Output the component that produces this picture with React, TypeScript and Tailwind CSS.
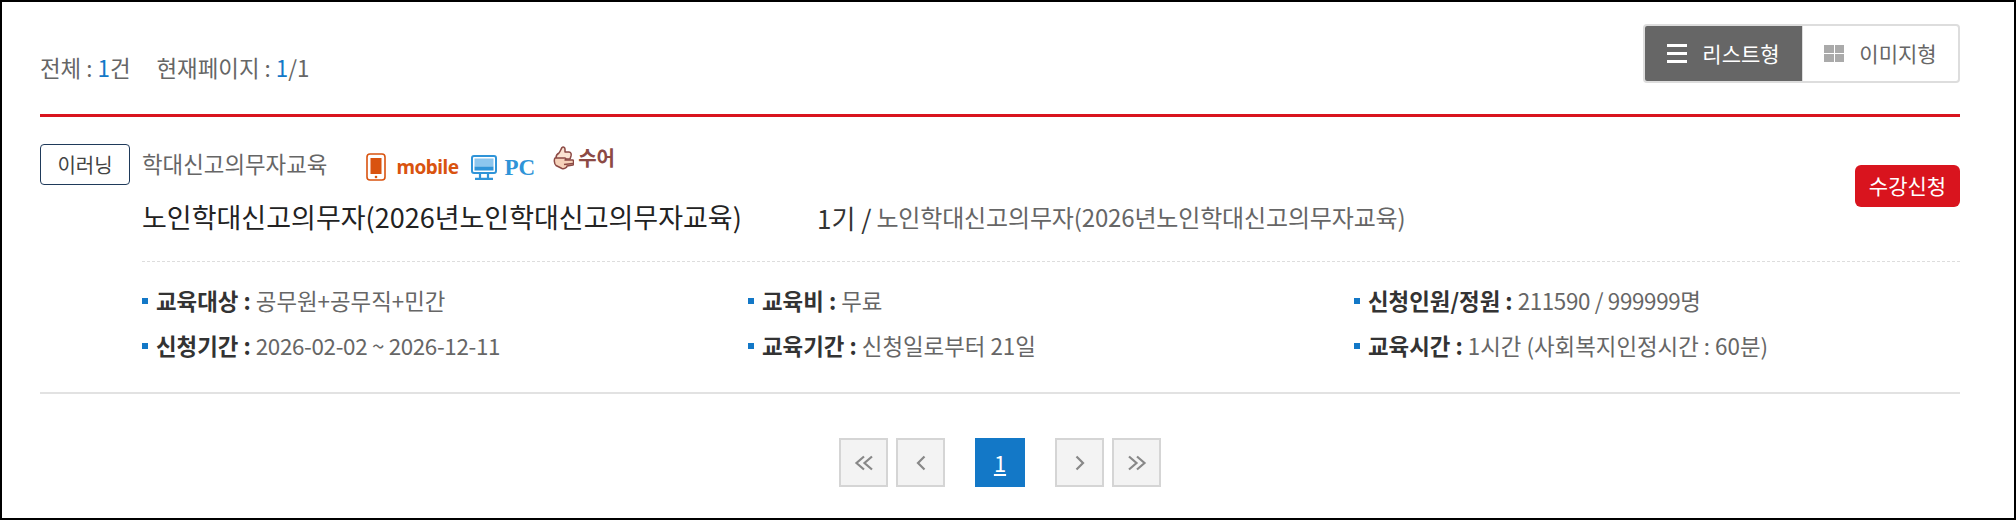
const FONT = "font-['Noto_Sans_CJK_KR','Noto_Sans',sans-serif]";

const infoItems = [
  { label: '교육대상', value: '공무원+공무직+민간' },
  { label: '교육비', value: '무료' },
  { label: '신청인원/정원', value: '211590 / 999999명', numeric: true },
  { label: '신청기간', value: '2026-02-02 ~ 2026-12-11', numeric: true },
  { label: '교육기간', value: '신청일로부터 21일' },
  { label: '교육시간', value: '1시간 (사회복지인정시간 : 60분)' },
];

function MobileBadge() {
  return (
    <span className="flex items-center gap-[10px] text-[#d9530f]">
      <svg width="20" height="28" viewBox="0 0 20 28">
        <rect x="1" y="1" width="18" height="26" rx="3" fill="none" stroke="currentColor" strokeWidth="1.6" />
        <rect x="4.5" y="5" width="11" height="16" fill="currentColor" />
        <circle cx="10" cy="24" r="1.3" fill="currentColor" />
      </svg>
      <span className="font-['Noto_Sans',sans-serif] text-[19px] font-bold leading-none tracking-[-0.5px]">mobile</span>
    </span>
  );
}

function PcBadge() {
  return (
    <span className="flex items-center gap-[8px] text-[#2f94d8]">
      <svg width="26" height="25" viewBox="0 0 26 25">
        <rect x="1" y="1" width="24" height="17" rx="2" fill="#fff" stroke="currentColor" strokeWidth="2" />
        <rect x="3.5" y="3.5" width="19" height="8" fill="#8cc6ee" />
        <rect x="3.5" y="11.5" width="19" height="4" fill="#2f94d8" />
        <path d="M9 18v5M17 18v5M4 23.8h18" fill="none" stroke="currentColor" strokeWidth="2.2" />
      </svg>
      <span className="font-['Liberation_Serif',serif] text-[23px] font-bold leading-none">PC</span>
    </span>
  );
}

function SignBadge() {
  return (
    <span className="flex items-center gap-[4px] text-[#8c4a45] mt-[-18px]">
      <svg width="21" height="24" viewBox="0 0 21 24" stroke="currentColor" strokeWidth="1.5" strokeLinejoin="round">
        <path d="M3 12c0-3 1-4 3-5 1-1 2-4 3-5.500 1-.8 3-.3 3 1.500v3h4c2 0 2.500 2 2 4l-1 3H3z" fill="#fbe3d2" />
        <path d="M2 12h10c1 0 1 2 0 2h8c.8 1 .8 4 0 5l-6 1c0 2-3 3-5 2.500l-6-3C1 18 1 13 2 12z" fill="#f6d2ba" />
        <path d="M11 18.500l9-1" fill="none" />
      </svg>
      <span className="text-[20px] font-bold leading-none">수어</span>
    </span>
  );
}

function PageBtn({ children }: { children: React.ReactNode }) {
  return (
    <a className="w-[49px] h-[49px] flex items-center justify-center bg-[#f3f3f3] border-2 border-[#d5d5d5] text-[#888]">
      {children}
    </a>
  );
}

function Chevron({ d }: { d: string }) {
  return (
    <svg width="20" height="16" viewBox="0 0 20 16" fill="none" stroke="currentColor" strokeWidth="2.2">
      <path d={d} />
    </svg>
  );
}

export default function App() {
  return (
    <div className={`${FONT} w-[2016px] h-[520px] bg-white border-2 border-black text-[22.4px] text-[#666] overflow-hidden`}>
      <div className="pl-[38px] pr-[54px] pt-[22px]">
        {/* top bar */}
        <div className="flex items-start justify-between h-[59px] mb-[31px]">
          <p className="mt-[28px] flex gap-[26px] leading-[30px]">
            <span>전체 : <b className="font-normal text-[#1378c7]">1</b>건</span>
            <span>현재페이지 : <b className="font-normal text-[#1378c7]">1</b>/1</span>
          </p>
          <div className="flex h-[59px] w-[317px] border-2 border-[#ddd] rounded-[4px] overflow-hidden text-[21px]">
            <button className="w-[157px] bg-[#666] text-white flex items-center justify-center gap-[15px]">
              <span className="w-[20px] h-[19px] flex flex-col justify-between">
                <i className="block h-[3px] bg-white" />
                <i className="block h-[3px] bg-white" />
                <i className="block h-[3px] bg-white" />
              </span>
              리스트형
            </button>
            <button className="flex-1 flex items-center justify-center gap-[15px] border-l border-[#ddd]">
              <span className="w-[20px] h-[17px] grid grid-cols-2 gap-[1px]">
                <i className="bg-[#aaa]" />
                <i className="bg-[#aaa]" />
                <i className="bg-[#aaa]" />
                <i className="bg-[#aaa]" />
              </span>
              이미지형
            </button>
          </div>
        </div>

        {/* list */}
        <div className="border-t-[3px] border-[#d9141e] border-b-2 border-b-[#e2e2e2] h-[280px] pt-[27px] relative">
          <div className="flex items-start h-[42px]">
            <span className="w-[90px] h-[41px] flex items-center justify-center border border-[#1f3a5a] rounded-[4px] text-[20px] text-[#444]">이러닝</span>
            <span className="ml-[12px] mt-[4px] leading-[30px]">학대신고의무자교육</span>
            <span className="ml-[39px] mt-[9px] flex items-center">
              <MobileBadge />
              <span className="ml-[12px]"><PcBadge /></span>
              <span className="ml-[18px]"><SignBadge /></span>
            </span>
          </div>
          <div className="ml-[102px] mt-[13px] flex items-center h-[36px]">
            <strong className="text-[27px] font-normal text-[#222] w-[675px] whitespace-nowrap">노인학대신고의무자(2026년노인학대신고의무자교육)</strong>
            <span className="text-[26px] text-[#333]">1기 /</span>
            <span className="ml-[5px] text-[24px] tracking-[-0.15px]">노인학대신고의무자(2026년노인학대신고의무자교육)</span>
          </div>
          <a className="absolute right-0 top-[48px] w-[105px] h-[42px] flex items-center justify-center bg-[#d9141e] rounded-[6px] text-[21px] text-white">수강신청</a>

          <div className="ml-[102px] mt-[26px] border-t border-dashed border-[#ddd] pt-[24px] grid grid-cols-3 gap-y-[15px]">
            {infoItems.map(item => (
              <div key={item.label} className="flex items-center h-[30px] whitespace-nowrap">
                <i className="w-[6px] h-[6px] bg-[#1378c7] mr-[8px]" />
                <b className="font-bold text-[#333] mr-[5px]">{item.label} :</b>
                <span className={item.numeric ? 'tracking-[-0.35px]' : ''}>{item.value}</span>
              </div>
            ))}
          </div>
        </div>

        {/* pagination */}
        <div className="mt-[44px] flex justify-center items-center">
          <PageBtn><Chevron d="M10 1.500 2.500 8l7.500 6.500M18 1.500 10.500 8l7.500 6.500" /></PageBtn>
          <span className="ml-[8px]"><PageBtn><Chevron d="M13.500 1.500 7 8l6.500 6.500" /></PageBtn></span>
          <a className="ml-[30px] w-[50px] h-[49px] flex items-center justify-center bg-[#1378c7] text-white underline text-[22px]">1</a>
          <span className="ml-[30px]"><PageBtn><Chevron d="M6.500 1.500 13 8l-6.500 6.500" /></PageBtn></span>
          <span className="ml-[8px]"><PageBtn><Chevron d="M2 1.500 9.500 8 2 14.500M10 1.500 17.500 8 10 14.500" /></PageBtn></span>
        </div>
      </div>
    </div>
  );
}
